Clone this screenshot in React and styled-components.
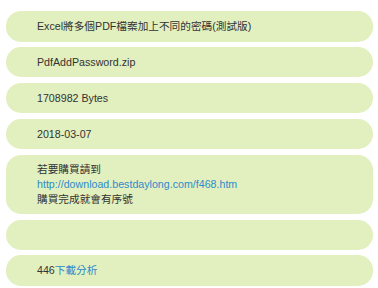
import React from 'react'
import styled, { createGlobalStyle } from 'styled-components'

const GlobalStyle = createGlobalStyle`
  body {
    margin: 0;
    background: #fff;
    font-family: "Liberation Sans", Arial, "Noto Sans CJK TC", sans-serif;
  }
`

const List = styled.div`
  display: flex;
  flex-direction: column;
  gap: 5.4px;
  padding: 11px 5px 0 6px;
`

const Item = styled.div`
  display: flex;
  flex-direction: column;
  justify-content: center;
  background: #e2efbe;
  border-radius: 15px;
  min-height: 30.5px;
  box-sizing: border-box;
  padding: 7.75px 12px 7.75px 31px;
  font-size: 10.67px;
  line-height: 14.7px;
  color: #333;
`

const Line = styled.div`
  white-space: nowrap;
`

const Link = styled.a`
  color: #2e8ccb;
  text-decoration: none;
`

export default function App() {
  return (
    <>
      <GlobalStyle />
      <List>
        <Item>Excel將多個PDF檔案加上不同的密碼(測試版)</Item>
        <Item>PdfAddPassword.zip</Item>
        <Item>1708982 Bytes</Item>
        <Item>2018-03-07</Item>
        <Item>
          <Line>若要購買請到</Line>
          <Line>
            <Link href="#">http://download.bestdaylong.com/f468.htm</Link>
          </Line>
          <Line>購買完成就會有序號</Line>
        </Item>
        <Item />
        <Item>
          <Line>
            446<Link href="#">下載分析</Link>
          </Line>
        </Item>
        <Item />
      </List>
    </>
  )
}
